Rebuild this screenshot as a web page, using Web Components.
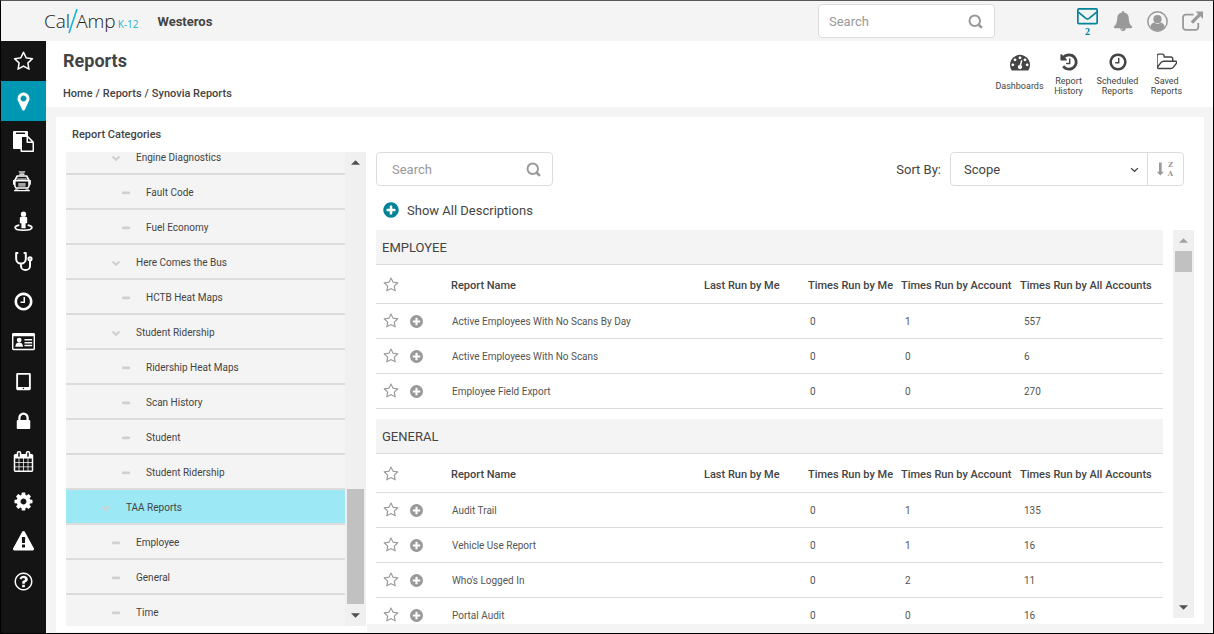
<!DOCTYPE html>
<html lang="en">
<head>
  <meta charset="utf-8">
  <meta name="viewport" content="width=device-width, initial-scale=1">
  <title>Reports</title>
  <style>
    body {
      margin: 0;
      font-family: Roboto, "Liberation Sans", sans-serif;
      font-size: 13px;
      color: #444;
      --teal: #0097b2;
      --teal-dark: #008298;
      --grey-bg: #f4f4f4;
      --line: #dcdcdc;
      --text-soft: #555;
    }
  </style>
</head>
<body>
  <app-shell></app-shell>

  <script>
    const ICONS = {
      star: '<path d="M1201 1004l306-297-422-62-189-382-189 382-422 62 306 297-73 421 378-199 377 199zm527-357q0 22-26 48l-363 354 86 500q1 7 1 20 0 50-41 50-19 0-40-12l-449-236-449 236q-22 12-40 12-21 0-31.5-14.5t-10.5-35.5q0-6 2-20l86-500-364-354q-25-27-25-48 0-37 56-46l502-73 225-455q19-41 49-41t49 41l225 455 502 73q56 9 56 46z"/>',
      marker: '<path d="M1152 640q0-106-75-181t-181-75-181 75-75 181 75 181 181 75 181-75 75-181zm256 0q0 109-33 179l-364 774q-16 33-47.5 52t-67.5 19-67.5-19-46.5-52l-365-774q-33-70-33-179 0-212 150-362t362-150 362 150 150 362z"/>',
      paste: '<path d="M768 1664h896v-640h-416q-40 0-68-28t-28-68v-416h-384v1152zm256-1440v-64q0-13-9.5-22.5t-22.5-9.5h-704q-13 0-22.5 9.5t-9.5 22.5v64q0 13 9.5 22.5t22.5 9.5h704q13 0 22.5-9.5t9.5-22.5zm256 672h299l-299-299v299zm512 128v672q0 40-28 68t-68 28h-960q-40 0-68-28t-28-68v-160h-544q-40 0-68-28t-28-68v-1344q0-40 28-68t68-28h1088q40 0 68 28t28 68v328q21 13 36 28l408 408q28 28 48 76t20 88z"/>',
      bus: '<g transform="scale(89.6)"><path d="M5 0h7l-1.500 2.500h-4z" opacity=".6"/><path d="M6 2.500h5V4H6z" opacity=".8"/><path d="M3.500 4h10L16 8.500v6L14.500 17h-12L1 14.500v-6zM4.500 5.500L3 8.500h11l-1.500-3zM2.500 10v4.300l.8 1.200h10.400l.8-1.200V10z" fill-rule="evenodd"/><path d="M0 8.500h1.500V13H0zM15.500 8.500H17V13h-1.500zM1 18h15v1.200H1z"/><path d="M5 11.500h7V15H5zM4 7h9v1.500H4zM2 17h3v1H2zM12 17h3v1h-3z" opacity=".6"/></g>',
      person: '<g transform="scale(89.6)"><circle cx="10" cy="3" r="2.500"/><path d="M7.500 5.500h5l1 1v5l-1.500.5v4.500H8V12l-1.500-.5v-5z"/><path d="M6 13.500c-2.500.4-4 1.100-4 2.200 0 1.600 3.600 2.600 8 2.600s8-1 8-2.600c0-1.100-1.500-1.800-4-2.200" fill="none" stroke="currentColor" stroke-width="1.600"/></g>',
      stethoscope: '<g transform="scale(89.6)" fill="none" stroke="currentColor" stroke-width="1.900" stroke-linecap="round" stroke-linejoin="round"><path d="M4.300 2H3v5.500a4.600 4.600 0 0 0 9.200 0V2h-1.300M7.600 12v2.200a4.300 4 0 0 0 8.600 0V9.500"/><circle cx="16.200" cy="7.500" r="1.500"/></g>',
      clock: '<path d="M1024 544v448q0 14-9 23t-23 9h-320q-14 0-23-9t-9-23v-64q0-14 9-23t23-9h224v-352q0-14 9-23t23-9h64q14 0 23 9t9 23zm416 352q0-148-73-273t-198-198-273-73-273 73-198 198-73 273 73 273 198 198 273 73 273-73 198-198 73-273zm224 0q0 209-103 385.5t-279.5 279.5-385.500 103-385.500-103-279.5-279.5-103-385.500 103-385.500 279.500-279.500 385.500-103 385.500 103 279.500 279.500 103 385.500z"/>',
      card: '<g transform="scale(74.667)"><path d="M1.500 3h21A1.500 1.500 0 0 1 24 4.500v15a1.500 1.500 0 0 1-1.500 1.500h-21A1.500 1.500 0 0 1 0 19.500v-15A1.500 1.500 0 0 1 1.500 3zm0 3.500v13h21v-13z" fill-rule="evenodd"/><circle cx="7.500" cy="10.500" r="2.500"/><path d="M3.500 17.500c0-3 1.500-4.500 4-4.500s4 1.500 4 4.500zM13 9.500h8v1.500h-8zM13 12.500h8V14h-8zM13 15.500h8V17h-8z"/></g>',
      tablet: '<path fill-rule="evenodd" d="M384 160h1024q112 0 112 112v1248q0 112-112 112H384q-112 0-112-112V272q0-112 112-112zm48 150v1060h928V310zm464 1120a56 56 0 1 0 1 0z"/>',
      lock: '<path d="M640 768h512v-192q0-106-75-181t-181-75-181 75-75 181v192zm832 96v576q0 40-28 68t-68 28h-960q-40 0-68-28t-28-68v-576q0-40 28-68t68-28h32v-192q0-184 132-316t316-132 316 132 132 316v192h32q40 0 68 28t28 68z"/>',
      calendar: '<path d="M192 1664h288v-288h-288v288zm352 0h320v-288h-320v288zm-352-352h288v-320h-288v320zm352 0h320v-320h-320v320zm-352-384h288v-288h-288v288zm736 736h320v-288h-320v288zm-384-736h320v-288h-320v288zm768 736h288v-288h-288v288zm-384-352h320v-320h-320v320zm-352-864v-288q0-13-9.5-22.5t-22.5-9.5h-64q-13 0-22.5 9.5t-9.5 22.5v288q0 13 9.5 22.5t22.5 9.5h64q13 0 22.5-9.5t9.5-22.5zm736 864h288v-320h-288v320zm-384-384h320v-288h-320v288zm384 0h288v-288h-288v288zm32-480v-288q0-13-9.5-22.5t-22.5-9.5h-64q-13 0-22.5 9.5t-9.5 22.5v288q0 13 9.5 22.5t22.5 9.5h64q13 0 22.5-9.5t9.5-22.5zm384-64v1280q0 52-38 90t-90 38h-1408q-52 0-90-38t-38-90v-1280q0-52 38-90t90-38h128v-96q0-66 47-113t113-47h64q66 0 113 47t47 113v96h384v-96q0-66 47-113t113-47h64q66 0 113 47t47 113v96h128q52 0 90 38t38 90z"/>',
      cog: '<path d="M1152 896q0-106-75-181t-181-75-181 75-75 181 75 181 181 75 181-75 75-181zm512-109v222q0 12-8 23t-20 13l-185 28q-19 54-39 91 35 50 107 138 10 12 10 25t-9 23q-27 37-99 108t-94 71q-12 0-26-9l-138-108q-44 23-91 38-16 136-29 186-7 28-36 28h-222q-14 0-24.5-8.5t-11.5-21.5l-28-184q-49-16-90-37l-141 107q-10 9-25 9-14 0-25-11-126-114-165-168-7-10-7-23 0-12 8-23 15-21 51-66.5t54-70.5q-27-50-41-99l-183-27q-13-2-21-12.5t-8-23.5v-222q0-12 8-23t19-13l186-28q14-46 39-92-40-57-107-138-10-12-10-24 0-10 9-23 26-36 98.5-107.5t94.5-71.5q13 0 26 10l138 107q44-23 91-38 16-136 29-186 7-28 36-28h222q14 0 24.5 8.5t11.5 21.5l28 184q49 16 90 37l142-107q9-9 24-9 13 0 25 10 129 119 165 170 7 8 7 22 0 12-8 23-15 21-51 66.5t-54 70.5q26 50 41 98l183 28q13 2 21 12.5t8 23.5z"/>',
      warning: '<path d="M1024 1375v-190q0-14-9.5-23.5t-22.5-9.5h-192q-13 0-22.5 9.5t-9.5 23.5v190q0 14 9.5 23.5t22.5 9.5h192q13 0 22.5-9.5t9.5-23.5zm-2-374l18-459q0-12-10-19-13-11-24-11h-220q-11 0-24 11-10 7-10 21l17 457q0 10 10 16.5t24 6.5h185q14 0 23.5-6.5t10.5-16.5zm-14-934l768 1408q35 63-2 126-17 29-46.5 46t-63.5 17h-1536q-34 0-63.5-17t-46.5-46q-37-63-2-126l768-1408q17-31 47-49t65-18 65 18 47 49z"/>',
      help: '<path d="M1008 1200v160q0 14-9 23t-23 9h-160q-14 0-23-9t-9-23v-160q0-14 9-23t23-9h160q14 0 23 9t9 23zm256-496q0 50-15 90t-45.5 69-52 44-59.5 36q-32 18-46.5 28t-26 24-11.5 29v32q0 14-9 23t-23 9h-160q-14 0-23-9t-9-23v-68q0-35 10.5-64.5t24-47.5 39-35.5 41-25.5 44.5-21q53-25 75-43t22-49q0-42-43.5-71.5t-95.5-29.5q-56 0-95 27-29 20-80 83-9 12-25 12-11 0-19-6l-108-82q-10-7-12-20t5-23q122-192 349-192 129 0 238.500 89.500t109.500 214.500zm-368-448q-130 0-248.500 51t-204 136.500-136.500 204-51 248.500 51 248.500 136.500 204 204 136.500 248.500 51 248.500-51 204-136.500 136.500-204 51-248.500-51-248.500-136.500-204-204-136.500-248.500-51zm768 640q0 209-103 385.500t-279.500 279.500-385.500 103-385.500-103-279.500-279.500-103-385.500 103-385.500 279.500-279.500 385.500-103 385.500 103 279.500 279.500 103 385.500z"/>',
      plus: '<path d="M1344 960v-128q0-26-19-45t-45-19h-256v-256q0-26-19-45t-45-19h-128q-26 0-45 19t-19 45v256h-256q-26 0-45 19t-19 45v128q0 26 19 45t45 19h256v256q0 26 19 45t45 19h128q26 0 45-19t19-45v-256h256q26 0 45-19t19-45zm320-64q0 209-103 385.500t-279.500 279.500-385.500 103-385.500-103-279.500-279.500-103-385.500 103-385.500 279.500-279.500 385.500-103 385.500 103 279.500 279.500 103 385.500z"/>',
      bell: '<path d="M912 1696q0-16-16-16-59 0-101.5-42.5t-42.5-101.5q0-16-16-16t-16 16q0 73 51.5 124.5t124.5 51.5q16 0 16-16zm816-288q0 52-38 90t-90 38h-448q0 106-75 181t-181 75-181-75-75-181h-448q-52 0-90-38t-38-90q50-42 91-88t85-119.5 74.5-158.5 50-206 19.5-260q0-152 117-282.5t307-158.5q-8-19-8-39 0-40 28-68t68-28 68 28 28 68q0 20-8 39 190 28 307 158.5t117 282.5q0 139 19.5 260t50 206 74.5 158.5 85 119.5 91 88z"/>',
      dashboard: '<path d="M384 1152q0-53-37.5-90.5t-90.5-37.5-90.5 37.5-37.5 90.5 37.5 90.5 90.5 37.5 90.5-37.5 37.5-90.5zm192-448q0-53-37.5-90.5t-90.5-37.5-90.5 37.5-37.5 90.5 37.5 90.5 90.5 37.5 90.5-37.5 37.5-90.5zm428 481l101-382q6-26-7.5-48.5t-38.5-29.5-48 6.5-30 39.5l-101 382q-60 5-107 43.5t-63 98.5q-20 77 20 146t117 89 146-20 89-117q16-60-6-117t-72-91zm660-33q0-53-37.5-90.5t-90.5-37.5-90.5 37.5-37.5 90.5 37.5 90.5 90.5 37.5 90.5-37.5 37.5-90.5zm-640-640q0-53-37.5-90.5t-90.5-37.5-90.5 37.5-37.5 90.5 37.5 90.5 90.5 37.5 90.5-37.5 37.5-90.5zm448 192q0-53-37.5-90.5t-90.5-37.5-90.5 37.5-37.5 90.5 37.5 90.5 90.5 37.5 90.5-37.5 37.5-90.5zm320 448q0 261-141 483-19 29-54 29h-1402q-35 0-54-29-141-221-141-483 0-182 71-348t191-286 286-191 348-71 348 71 286 191 191 286 71 348z"/>',
      history: '<path d="M1664 896q0 156-61 298t-164 245-245 164-298 61q-172 0-327-72.5t-264-204.5q-7-10-6.5-22.5t8.5-20.5l137-138q10-9 25-9 16 2 23 12 73 95 179 147t225 52q104 0 198.5-40.5t163.5-109.5 109.5-163.5 40.5-198.5-40.5-198.5-109.5-163.5-163.5-109.5-198.5-40.5q-98 0-188 35.5t-160 101.5l137 138q31 30 14 69-17 40-59 40h-448q-26 0-45-19t-19-45v-448q0-42 40-59 39-17 69 14l130 129q107-101 244.5-156.5t284.5-55.5q156 0 298 61t245 164 164 245 61 298zm-640-288v448q0 14-9 23t-23 9h-320q-14 0-23-9t-9-23v-64q0-14 9-23t23-9h224v-352q0-14 9-23t23-9h64q14 0 23 9t9 23z"/>',
      folder: '<path d="M1717 931q0-35-53-35h-1088q-40 0-85.5 21.5t-71.5 52.5l-294 363q-18 24-18 40 0 35 53 35h1088q40 0 86-22t71-53l294-363q18-22 18-39zm-1141-163h768v-160q0-40-28-68t-68-28h-576q-40 0-68-28t-28-68v-64q0-40-28-68t-68-28h-320q-40 0-68 28t-28 68v853l256-315q44-53 116-87.500t140-34.500zm1269 163q0 62-46 120l-295 363q-43 53-116 87.500t-140 34.500h-1088q-92 0-158-66t-66-158v-960q0-92 66-158t158-66h320q92 0 158 66t66 158v32h544q92 0 158 66t66 158v160h192q54 0 99 24.500t67 70.500q15 32 15 68z"/>',
      mail: '<g transform="scale(89.6)" fill="none" stroke="currentColor" stroke-width="1.600"><rect x=".8" y="2.700" width="18.400" height="14" rx="1"/><path d="M1 5.500l7.200 6q1.800 1.400 3.600 0l7.200-6"/></g>',
      user: '<g transform="scale(89.6)"><circle cx="10" cy="10" r="9.200" fill="none" stroke="currentColor" stroke-width="1.400"/><circle cx="10" cy="7.800" r="3.900"/><path d="M3.200 15.200c.5-2.600 1.800-4 3.700-4.200a4.900 4.900 0 0 0 6.200 0c1.900.2 3.200 1.600 3.700 4.200A8.600 8.600 0 0 1 10 18.700a8.600 8.600 0 0 1-6.800-3.500z"/></g>',
      external: '<g transform="scale(89.6)"><path d="M11 3.500H3.500a2.500 2.500 0 0 0-2.500 2.500v9.500A2.500 2.500 0 0 0 3.500 18H13a2.500 2.500 0 0 0 2.500-2.500V11.500" fill="none" stroke="currentColor" stroke-width="1.700"/><path d="M13 .5h7v7l-2.400-2.400-7.100 7.100-2.200-2.200 7.100-7.100z"/></g>',
      search: '<g transform="scale(89.6)" fill="none" stroke="currentColor" stroke-width="2.600"><circle cx="9" cy="9" r="7"/><path d="M14 14l4.500 4.500" stroke-width="3.400"/></g>',
      chevron: '<path d="M270 620l626 600 626-600" fill="none" stroke="currentColor" stroke-width="400"/>',
      caret: '<path d="M200 620l696 640 696-640" fill="none" stroke="currentColor" stroke-width="250"/>',
      dash: '<rect x="180" y="620" width="1440" height="520" rx="180"/>',
      arrow: '<path d="M640 60h340v1180h280L810 1740 360 1240h280z"/>',
      up: '<path d="M896 448l896 896H0z"/>',
      down: '<path d="M896 1344L0 448h1792z"/>'
    };

    class UiIcon extends HTMLElement {
      connectedCallback() {
        const size = this.getAttribute('size') || 20;
        this.attachShadow({ mode: 'open' }).innerHTML = `
          <style>
            :host { display: inline-flex; flex: none; }
            svg { display: block; fill: currentColor; }
          </style>
          <svg width="${size}" height="${size}" viewBox="0 0 1792 1792" aria-hidden="true">${ICONS[this.getAttribute('name')]}</svg>`;
      }
    }

    class SearchBox extends HTMLElement {
      connectedCallback() {
        this.attachShadow({ mode: 'open' }).innerHTML = `
          <style>
            :host {
              display: flex;
              align-items: center;
              box-sizing: border-box;
              width: 177px;
              height: 34px;
              padding: 0 11px 0 var(--inset, 10px);
              border: 1px solid var(--line);
              border-radius: 4px;
              background: white;
              color: #999;
            }
            input {
              flex: 1;
              min-width: 0;
              padding: 0;
              border: 0;
              outline: 0;
              background: none;
              font: inherit;
              color: #444;
            }
            input::placeholder { color: #999; }
          </style>
          <input type="text" placeholder="Search" aria-label="Search">
          <ui-icon name="search" size="15"></ui-icon>`;
      }
    }

    // Scroll track with arrows; --start and --thumb place the handle
    class ScrollRail extends HTMLElement {
      connectedCallback() {
        this.attachShadow({ mode: 'open' }).innerHTML = `
          <style>
            :host {
              display: flex;
              flex: none;
              flex-direction: column;
              align-items: center;
              width: 21px;
              background: #f0f0f0;
              color: #505050;
            }
            .arrow {
              display: grid;
              place-items: center;
              height: 21px;
            }
            :host([at-top]) .up { color: #a3a3a3; }
            .track {
              display: grid;
              grid-template-rows: var(--start, 0) var(--thumb, 21px);
              flex: 1;
              align-self: stretch;
              padding: 0 2px;
            }
            .thumb {
              grid-row: 2;
              background: #c1c1c1;
            }
          </style>
          <div class="arrow up"><ui-icon name="up" size="9"></ui-icon></div>
          <div class="track"><div class="thumb"></div></div>
          <div class="arrow"><ui-icon name="down" size="9"></ui-icon></div>`;
      }
    }

    class TopBar extends HTMLElement {
      connectedCallback() {
        this.attachShadow({ mode: 'open' }).innerHTML = `
          <style>
            :host {
              display: flex;
              align-items: center;
              height: 40px;
              padding: 0 3px 0 43px;
              background: var(--grey-bg);
            }
            .logo {
              display: flex;
              align-items: center;
              color: #222;
              font-family: "Open Sans", sans-serif;
              font-size: 19px;
              font-weight: 300;
              line-height: 24px;
              text-decoration: none;
            }
            .logo svg { display: block; margin: 0 -2px; }
            .logo small {
              align-self: flex-end;
              margin-left: 2px;
              color: #19b5d3;
              font-size: 10px;
              font-weight: 400;
              line-height: 20px;
            }
            .account {
              flex: 1;
              margin-left: 19px;
              font-weight: 700;
            }
            nav {
              display: flex;
              margin-left: 75px;
            }
            button {
              display: flex;
              flex-direction: column;
              align-items: center;
              justify-content: center;
              width: 35px;
              height: 40px;
              padding: 0;
              border: 0;
              background: none;
              color: #999;
            }
            .mail {
              color: var(--teal-dark);
              font: bold 10px/10px "Liberation Serif", serif;
            }
          </style>
          <a class="logo" href="#home">Cal<svg width="10" height="26" viewBox="0 0 10 26"><path d="M1 25L9 1" stroke="#19b5d3" stroke-width="1.600"/></svg>Amp<small>K-12</small></a>
          <span class="account">Westeros</span>
          <search-box></search-box>
          <nav>
            <button class="mail" aria-label="Messages"><ui-icon name="mail" size="21"></ui-icon>2</button>
            <button aria-label="Notifications"><ui-icon name="bell"></ui-icon></button>
            <button aria-label="Account"><ui-icon name="user" size="21"></ui-icon></button>
            <button aria-label="Open in new window"><ui-icon name="external" size="21"></ui-icon></button>
          </nav>`;
      }
    }

    class SideNav extends HTMLElement {
      connectedCallback() {
        const items = ['star', 'marker', 'paste', 'bus', 'person', 'stethoscope', 'clock',
          'card', 'tablet', 'lock', 'calendar', 'cog', 'warning', 'help'];
        this.attachShadow({ mode: 'open' }).innerHTML = `
          <style>
            :host {
              display: flex;
              flex-direction: column;
              width: 45px;
              background: #141414;
            }
            a {
              display: grid;
              place-items: center;
              height: 40px;
              color: white;
            }
            a.active { background: var(--teal); }
          </style>
          ${items.map((name) => `
            <a href="#${name}" class="${name === 'marker' ? 'active' : ''}" aria-label="${name}">
              <ui-icon name="${name}" size="${name === 'card' ? 23 : 21}"></ui-icon>
            </a>`).join('')}`;
      }
    }

    class PageHeader extends HTMLElement {
      connectedCallback() {
        this.attachShadow({ mode: 'open' }).innerHTML = `
          <style>
            :host {
              display: flex;
              justify-content: space-between;
              height: 66px;
              padding: 0 22px 0 17px;
              background: white;
            }
            h1 {
              margin: 8px 0 10px;
              font-size: 18px;
              font-weight: 700;
              line-height: 24px;
            }
            .crumbs {
              display: flex;
              gap: 3px;
              font-size: 11px;
              font-weight: 500;
              line-height: 22px;
            }
            .crumbs a, .actions a {
              color: inherit;
              text-decoration: none;
            }
            .actions {
              display: flex;
              padding-top: 11px;
            }
            .actions a {
              display: flex;
              flex-direction: column;
              align-items: center;
              width: 49px;
              font-size: 9px;
              line-height: 10px;
              text-align: center;
            }
            .actions span {
              display: flex;
              align-items: center;
              height: 20px;
              margin-top: 4px;
            }
          </style>
          <div>
            <h1>Reports</h1>
            <nav class="crumbs"><a href="#home">Home</a><span>/</span><a href="#reports">Reports</a><span>/</span><a href="#synovia">Synovia Reports</a></nav>
          </div>
          <nav class="actions">
            <a href="#dashboards"><ui-icon name="dashboard"></ui-icon><span>Dashboards</span></a>
            <a href="#history"><ui-icon name="history"></ui-icon><span>Report<br>History</span></a>
            <a href="#scheduled"><ui-icon name="clock"></ui-icon><span>Scheduled<br>Reports</span></a>
            <a href="#saved"><ui-icon name="folder"></ui-icon><span>Saved<br>Reports</span></a>
          </nav>`;
      }
    }

    class CategoryTree extends HTMLElement {
      connectedCallback() {
        // [label, depth, has children]
        const rows = [
          ['Engine Diagnostics', 2, true],
          ['Fault Code', 3],
          ['Fuel Economy', 3],
          ['Here Comes the Bus', 2, true],
          ['HCTB Heat Maps', 3],
          ['Student Ridership', 2, true],
          ['Ridership Heat Maps', 3],
          ['Scan History', 3],
          ['Student', 3],
          ['Student Ridership', 3],
          ['TAA Reports', 1, true],
          ['Employee', 2],
          ['General', 2],
          ['Time', 2]
        ];
        const root = this.attachShadow({ mode: 'open' });
        root.innerHTML = `
          <style>
            :host {
              display: flex;
              flex-direction: column;
              min-height: 0;
              background: white;
            }
            h2 {
              margin: 0;
              padding: 8px 16px 7px;
              font-size: 11px;
              font-weight: 500;
              line-height: 20px;
            }
            .body {
              display: flex;
              flex: 1;
              min-height: 0;
              margin: 0 1px 6px 10px;
            }
            ul {
              flex: 1;
              margin: 0;
              padding: 0;
              overflow: hidden;
              list-style: none;
            }
            button {
              display: flex;
              align-items: center;
              gap: 15px;
              box-sizing: border-box;
              width: 100%;
              height: 35px;
              padding: 2px 0 0 calc(25px + var(--depth) * 10px);
              border: 0;
              border-bottom: 2px solid var(--line);
              background: var(--grey-bg);
              color: inherit;
              font: inherit;
              font-size: 10px;
            }
            button.selected { background: #9ce9f5; }
            ui-icon { color: #d0d0d0; }
            scroll-rail { --start: 316px; --thumb: 115px; }
          </style>
          <h2>Report Categories</h2>
          <div class="body">
            <ul>
              ${rows.map(([label, depth, parent]) => `
                <li><button class="${depth === 1 ? 'selected' : ''}" style="--depth: ${depth}">
                  <ui-icon name="${parent ? 'chevron' : 'dash'}" size="10"></ui-icon>${label}
                </button></li>`).join('')}
            </ul>
            <scroll-rail></scroll-rail>
          </div>`;
        root.querySelector('ul').scrollTop = 12;
      }
    }

    class ReportGroup extends HTMLElement {
      set reports(list) {
        this.attachShadow({ mode: 'open' }).innerHTML = `
          <style>
            :host {
              display: block;
              margin-bottom: 10px;
            }
            h3 {
              margin: 0;
              padding: 2px 6px 0;
              border-bottom: 1px solid var(--line);
              background: var(--grey-bg);
              font-size: 13px;
              font-weight: 400;
              line-height: 32px;
            }
            table {
              width: 100%;
              table-layout: fixed;
              border-collapse: separate;
              border-spacing: 0;
            }
            th, td {
              padding: 0;
              border-bottom: 1px solid var(--line);
              text-align: left;
              white-space: nowrap;
            }
            th {
              height: 36px;
              padding-top: 2px;
              font-size: 11px;
              font-weight: 500;
            }
            td {
              height: 34px;
              color: var(--text-soft);
              font-size: 10px;
            }
            .last { width: 104px; }
            .me { width: 93px; }
            .account { width: 119px; }
            .all { width: 143px; }
            td { padding-left: 4px; }
            td.name { padding-left: 1px; }
            td.me { padding-left: 2px; }
            th.icons, td.icons { padding-left: 7px; width: 68px; }
            .icons div {
              display: flex;
              align-items: center;
              gap: 10px;
            }
            button {
              display: flex;
              padding: 0;
              border: 0;
              background: none;
              color: #999;
            }
            a {
              color: inherit;
              text-decoration: none;
            }
          </style>
          <h3>${this.getAttribute('heading')}</h3>
          <table>
            <thead>
              <tr>
                <th class="icons"><button aria-label="Favorite all"><ui-icon name="star" size="16"></ui-icon></button></th>
                <th>Report Name</th>
                <th class="last">Last Run by Me</th>
                <th class="me">Times Run by Me</th>
                <th class="account">Times Run by Account</th>
                <th class="all">Times Run by All Accounts</th>
              </tr>
            </thead>
            <tbody>
              ${list.map(([name, me, account, all]) => `
                <tr>
                  <td class="icons"><div>
                    <button aria-label="Favorite"><ui-icon name="star" size="16"></ui-icon></button>
                    <button aria-label="Show description"><ui-icon name="plus" size="15"></ui-icon></button>
                  </div></td>
                  <td class="name"><a href="#report">${name}</a></td>
                  <td></td>
                  <td class="me">${me}</td>
                  <td>${account}</td>
                  <td>${all}</td>
                </tr>`).join('')}
            </tbody>
          </table>`;
      }
    }

    class ReportList extends HTMLElement {
      connectedCallback() {
        const groups = {
          EMPLOYEE: [
            ['Active Employees With No Scans By Day', 0, 1, 557],
            ['Active Employees With No Scans', 0, 0, 6],
            ['Employee Field Export', 0, 0, 270]
          ],
          GENERAL: [
            ['Audit Trail', 0, 1, 135],
            ['Vehicle Use Report', 0, 1, 16],
            ["Who's Logged In", 0, 2, 11],
            ['Portal Audit', 0, 0, 16]
          ]
        };
        const root = this.attachShadow({ mode: 'open' });
        root.innerHTML = `
          <style>
            :host {
              display: flex;
              flex-direction: column;
              min-width: 0;
              min-height: 0;
              padding: 35px 10px 0 9px;
              background: white;
            }
            .toolbar {
              display: flex;
              align-items: center;
              margin-right: 10px;
            }
            search-box { --inset: 15px; }
            label { margin: 0 9px 0 auto; }
            .sort {
              display: grid;
              grid-template-columns: 197px 35px;
              height: 32px;
              border: 1px solid var(--line);
              border-radius: 4px;
            }
            select {
              grid-area: 1 / 1;
              padding: 0 13px;
              border: 0;
              border-right: 1px solid var(--line);
              appearance: none;
              background: none;
              color: inherit;
              font: inherit;
            }
            .sort > ui-icon {
              grid-area: 1 / 1;
              place-self: center end;
              margin-right: 9px;
              pointer-events: none;
            }
            .sort button {
              display: flex;
              align-items: center;
              justify-content: center;
              padding: 0 4px 0 0;
              border: 0;
              background: none;
              color: #999;
              font: bold 7px/9px "DejaVu Serif", serif;
            }
            .sort span {
              display: flex;
              flex-direction: column;
              align-items: center;
            }
            .sort i { font-style: normal; }
            .show-all {
              display: flex;
              align-items: center;
              align-self: flex-start;
              gap: 7px;
              height: 24px;
              margin: 12px 0 8px;
              padding: 0 6px;
              border: 0;
              background: none;
              color: inherit;
              font: inherit;
            }
            .show-all ui-icon { color: var(--teal-dark); }
            .body {
              display: flex;
              flex: 1;
              gap: 10px;
              min-height: 0;
            }
            .groups {
              flex: 1;
              min-width: 0;
              overflow: hidden;
            }
            scroll-rail { margin-bottom: 6px; }
          </style>
          <div class="toolbar">
            <search-box></search-box>
            <label for="sort">Sort By:</label>
            <div class="sort">
              <select id="sort"><option>Scope</option></select>
              <ui-icon name="caret" size="9"></ui-icon>
              <button aria-label="Sort descending"><ui-icon name="arrow" size="14"></ui-icon><span><i>Z</i><i>A</i></span></button>
            </div>
          </div>
          <button class="show-all"><ui-icon name="plus" size="18"></ui-icon>Show All Descriptions</button>
          <div class="body">
            <div class="groups"></div>
            <scroll-rail at-top></scroll-rail>
          </div>`;
        for (const [heading, reports] of Object.entries(groups)) {
          const group = document.createElement('report-group');
          group.setAttribute('heading', heading);
          group.reports = reports;
          root.querySelector('.groups').append(group);
        }
      }
    }

    class AppShell extends HTMLElement {
      connectedCallback() {
        this.attachShadow({ mode: 'open' }).innerHTML = `
          <style>
            :host {
              display: grid;
              grid-template: auto auto 1fr / auto 1fr;
              box-sizing: border-box;
              height: 100vh;
              border: 1px solid black;
              border-top-color: #5b565c;
              background: var(--grey-bg);
            }
            top-bar { grid-column: 1 / 3; }
            side-nav {
              grid-row: 2 / 4;
              min-height: 0;
              overflow: hidden;
            }
            main {
              display: flex;
              min-height: 0;
              padding: 10px 9px 0 10px;
            }
            category-tree {
              flex: 0 0 311px;
              margin-bottom: 1px;
            }
            report-list {
              flex: 1;
              margin-bottom: 9px;
            }
          </style>
          <top-bar></top-bar>
          <side-nav></side-nav>
          <page-header></page-header>
          <main>
            <category-tree></category-tree>
            <report-list></report-list>
          </main>`;
      }
    }

    customElements.define('ui-icon', UiIcon);
    customElements.define('search-box', SearchBox);
    customElements.define('scroll-rail', ScrollRail);
    customElements.define('top-bar', TopBar);
    customElements.define('side-nav', SideNav);
    customElements.define('page-header', PageHeader);
    customElements.define('category-tree', CategoryTree);
    customElements.define('report-group', ReportGroup);
    customElements.define('report-list', ReportList);
    customElements.define('app-shell', AppShell);
  </script>
</body>
</html>
